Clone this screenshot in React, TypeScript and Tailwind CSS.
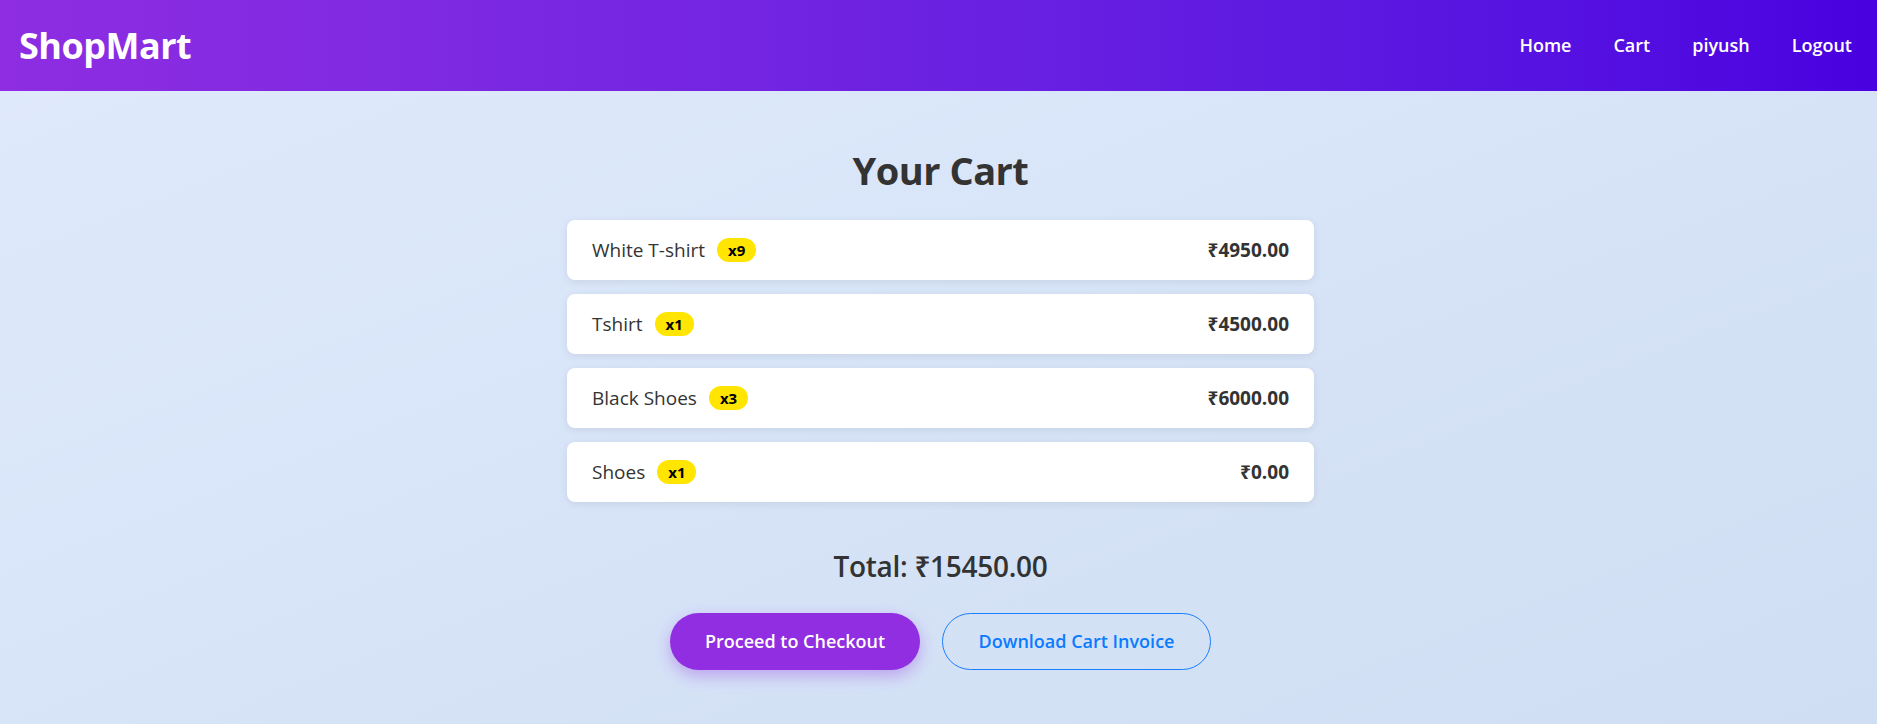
import React from "react";

type CartItem = {
  name: string;
  qty: number;
  price: string;
};

const items: CartItem[] = [
  { name: "White T-shirt", qty: 9, price: "4950.00" },
  { name: "Tshirt", qty: 1, price: "4500.00" },
  { name: "Black Shoes", qty: 3, price: "6000.00" },
  { name: "Shoes", qty: 1, price: "0.00" },
];

function Navbar(): React.JSX.Element {
  return (
    <nav className="flex h-[91px] items-center justify-between bg-gradient-to-r from-[#8e2de2] to-[#4a00e0] pl-[19px] pr-[25px] text-white">
      <h1 className="text-[36px] font-bold leading-none tracking-[-0.5px]">ShopMart</h1>
      <ul className="flex items-center gap-[42px] text-[18px] font-semibold">
        <li>Home</li>
        <li>Cart</li>
        <li>piyush</li>
        <li>Logout</li>
      </ul>
    </nav>
  );
}

function CartRow({ item }: { item: CartItem }): React.JSX.Element {
  return (
    <li className="flex h-[60px] items-center justify-between rounded-[8px] bg-white px-[25px] shadow-[0_2px_8px_rgba(0,0,0,0.08)]">
      <div className="flex items-center">
        <span className="text-[19px] text-[#333]">{item.name}</span>
        <span className="ml-[12px] flex h-[24px] items-center rounded-full bg-[#ffe500] px-[11px] text-[15px] font-bold text-black">
          x{item.qty}
        </span>
      </div>
      <span className="text-[19px] font-bold text-[#333]">₹{item.price}</span>
    </li>
  );
}

export default function App(): React.JSX.Element {
  return (
    <div
      className="min-h-[724px] bg-gradient-to-br from-[#e0eafc] to-[#cfdef3]"
      style={{ fontFamily: '"Open Sans", "Noto Sans", sans-serif' }}
    >
      <Navbar />
      <main className="flex flex-col items-center pl-[4px] pt-[55px]">
        <h2 className="text-[38px] font-bold leading-[48px] tracking-[-0.5px] text-[#333]">Your Cart</h2>
        <ul className="mt-[26px] flex w-[747px] flex-col gap-[14px]">
          {items.map((item) => (
            <CartRow key={item.name} item={item} />
          ))}
        </ul>
        <p className="mt-[44px] text-[28px] font-semibold leading-[40px] tracking-[-0.3px] text-[#333]">
          Total: ₹15450.00
        </p>
        <div className="mt-[27px] flex gap-[22px]">
          <button
            type="button"
            className="h-[57px] w-[250px] rounded-full bg-[#912ee1] text-[18px] font-semibold text-white shadow-[0_6px_16px_rgba(142,45,226,0.35)]"
          >
            Proceed to Checkout
          </button>
          <button
            type="button"
            className="h-[57px] w-[269px] rounded-full border border-[#1a7fff] text-[18px] font-semibold text-[#0a7bff]"
          >
            Download Cart Invoice
          </button>
        </div>
      </main>
    </div>
  );
}
